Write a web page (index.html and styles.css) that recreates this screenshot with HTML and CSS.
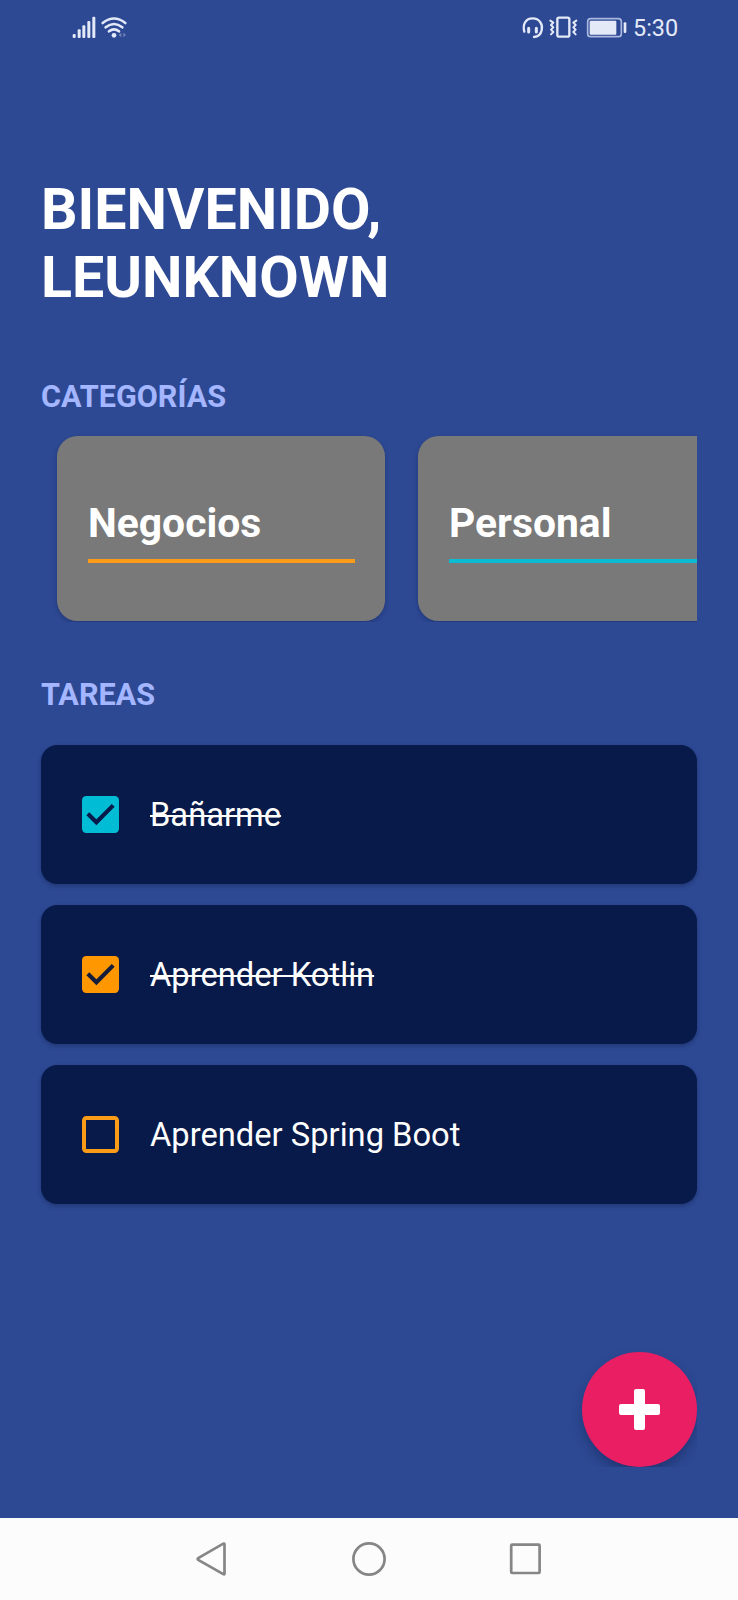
FILE: index.html
```html
<!DOCTYPE html>
<html lang="es">
<head>
<meta charset="utf-8">
<title>Tareas</title>
<link rel="stylesheet" href="styles.css">
</head>
<body>
<div class="screen">
  <header class="status">
    <svg class="status-left" viewBox="0 0 240 135" aria-hidden="true">
      <g fill="#e4e9f8">
        <rect x="38" y="87" width="9" height="12" rx="3"/>
        <rect x="53" y="73" width="9" height="26" rx="3"/>
        <rect x="67" y="61" width="9" height="38" rx="3"/>
        <rect x="82" y="48" width="9" height="51" rx="3"/>
        <rect x="97" y="35" width="9" height="64" rx="3"/>
        <circle cx="162" cy="91" r="7"/>
      </g>
      <g fill="none" stroke="#e4e9f8" stroke-width="8" stroke-linecap="round">
        <path d="M128 54Q162 27 196 54M137 67Q162 47 187 67M147 79Q162 67 177 79"/>
      </g>
      <path d="M184 83v14l-8-7zM190 83v14l8-7z" fill="#7286ba"/>
    </svg>
    <div class="status-right">
      <svg class="status-icons" viewBox="0 0 360 135" aria-hidden="true">
        <g fill="none" stroke="#e4e9f8" stroke-width="7" stroke-linecap="round">
          <path d="M43 80C37 58 47 40 68 40s31 18 27 36q-4 19-23 20"/>
          <path d="M56 70v11M79 70v11" stroke-width="9"/>
          <rect x="142" y="38" width="36" height="57" rx="5"/>
          <path d="M121 47l9 6-7 7 7 7-7 7 7 7-7 7M199 47l-9 6 7 7-7 7 7 7-7 7 7 7" stroke-width="6" stroke-linejoin="round"/>
        </g>
        <rect x="233" y="41" width="101" height="54" rx="9" fill="none" stroke="#aab8df" stroke-width="5"/>
        <rect x="239" y="47" width="80" height="42" rx="3" fill="#e4e9f8"/>
        <rect x="341" y="52" width="8" height="32" rx="3" fill="#e4e9f8"/>
      </svg>
      <span class="clock">5:30</span>
    </div>
  </header>

  <main class="content">
    <h1 class="title">BIENVENIDO,<br>LEUNKNOWN</h1>
    <h2 class="subtitle">CATEGORÍAS</h2>
    <div class="categories">
      <div class="category"><span class="category-name">Negocios</span><span class="divider business"></span></div>
      <div class="category"><span class="category-name">Personal</span><span class="divider personal"></span></div>
    </div>
    <h2 class="subtitle">TAREAS</h2>
    <ul class="tasks">
      <li class="task done">
        <svg class="check" viewBox="0 0 37 37"><rect width="37" height="37" rx="4.2" fill="#00bcd4"/><path d="M5.8 17.7L14.4 26.3 31.2 9.4" fill="none" stroke="#071a49" stroke-width="4.1"/></svg>
        <span class="task-name">Bañarme</span>
      </li>
      <li class="task done">
        <svg class="check" viewBox="0 0 37 37"><rect width="37" height="37" rx="4.2" fill="#ff9800"/><path d="M5.8 17.7L14.4 26.3 31.2 9.4" fill="none" stroke="#151d3d" stroke-width="4.1"/></svg>
        <span class="task-name">Aprender Kotlin</span>
      </li>
      <li class="task">
        <svg class="check" viewBox="0 0 37 37"><rect x="2" y="2" width="33" height="33" rx="2.4" fill="none" stroke="#fb9c18" stroke-width="4"/></svg>
        <span class="task-name">Aprender Spring Boot</span>
      </li>
    </ul>
    <button class="fab" aria-label="Agregar">
      <svg viewBox="0 0 41 41"><path d="M17 0H24Q26 0 26 2V15H39Q41 15 41 17V24Q41 26 39 26H26V39Q26 41 24 41H17Q15 41 15 39V26H2Q0 26 0 24V17Q0 15 2 15H15V2Q15 0 17 0Z" fill="#fff"/></svg>
    </button>
  </main>

  <nav class="navbar">
    <svg viewBox="0 0 36 36"><path d="M3.2 17.2L28.3 2.7Q29.5 2.2 29.5 3.6V32.4Q29.5 33.8 28.3 33.1L3.2 18.8Q2 18 3.2 17.2Z"/></svg>
    <svg viewBox="0 0 36 36"><circle cx="18" cy="18" r="15.6"/></svg>
    <svg viewBox="0 0 36 36"><rect x="3.2" y="3.6" width="28.4" height="28.4" rx="1"/></svg>
  </nav>
</div>
</body>
</html>
```
FILE: styles.css
```css
* { box-sizing: border-box; }

body { margin: 0; }

.screen {
  display: flex;
  flex-direction: column;
  width: 738px;
  height: 1600px;
  overflow: hidden;
  background: #2d4993;
  color: #fff;
  font-family: Roboto, sans-serif;
}

.status {
  display: flex;
  justify-content: space-between;
  height: 55px;
  padding: 5px 58px 0 60px;
}

.status-left { width: 80px; height: 45px; }
.status-right { display: flex; }
.status-icons { width: 120px; height: 45px; }

.clock {
  width: 47px;
  margin-left: 3px;
  font-size: 23.4px;
  line-height: 46px;
  color: #e4e9f8;
  white-space: nowrap;
}

.content {
  display: flex;
  flex: 1;
  flex-direction: column;
  min-height: 0;
  padding: 120.5px 41px 0;
}

.title {
  margin: 0 0 67px;
  font-size: 57.3px;
  font-weight: 700;
  line-height: 68px;
}

.subtitle {
  margin: 0;
  font-size: 30.6px;
  font-weight: 700;
  line-height: 36px;
  color: #a3b6ff;
}

.categories {
  display: flex;
  flex: none;
  gap: 33px;
  height: 206px;
  margin: 1.5px 0 54.5px;
  padding: 20px 0 1px 16px;
  overflow: hidden;
}

.category {
  flex: none;
  width: 328px;
  padding: 63px 30.5px 0;
  border-radius: 20.5px;
  background: #797979;
  box-shadow: 0 2px 4px rgba(10, 20, 60, .3);
}

.category-name {
  display: block;
  padding-left: .5px;
  font-size: 40.8px;
  font-weight: 700;
  line-height: 48px;
}

.divider { display: block; height: 4px; margin-top: 11.5px; }
.business { background: #fb9c18; }
.personal { background: #0cbcd2; }

.tasks {
  display: flex;
  flex-direction: column;
  gap: 21px;
  margin: 32.5px 0 0;
  padding: 0;
  list-style: none;
}

.task {
  display: flex;
  align-items: center;
  gap: 31px;
  height: 139px;
  padding: 0 41px;
  border-radius: 16.4px;
  background: #071a49;
  box-shadow: 0 2px 4px rgba(10, 20, 60, .35);
}

.check { width: 37px; height: 37px; }

.task-name { font-size: 32.7px; line-height: 38px; }
.done .task-name { text-decoration: line-through; text-decoration-thickness: 2px; }

.fab {
  display: flex;
  align-items: center;
  justify-content: center;
  align-self: flex-end;
  width: 115px;
  height: 115px;
  margin: auto 0 51px;
  padding: 0;
  border: 0;
  border-radius: 50%;
  background: #e91e63;
  box-shadow: 0 7px 13px -2px rgba(10, 20, 60, .4);
  clip-path: inset(-20px 0 0 -20px);
}

.fab svg { width: 41px; height: 41px; }

.navbar {
  display: flex;
  justify-content: center;
  gap: 120.5px;
  height: 82px;
  padding-top: 23px;
  background: #fcfcfc;
}

.navbar svg {
  width: 36px;
  height: 36px;
  fill: none;
  stroke: #868686;
  stroke-width: 2.7;
}
```
